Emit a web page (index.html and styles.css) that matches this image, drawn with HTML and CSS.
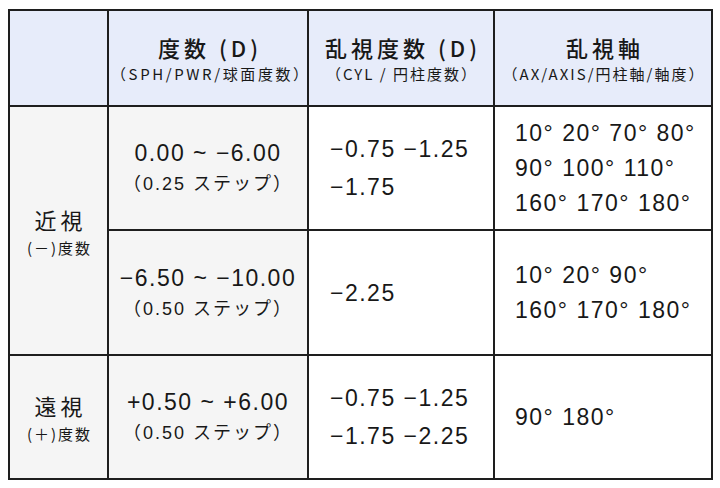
FILE: index.html
```html
<!DOCTYPE html>
<html lang="ja">
<head>
<meta charset="utf-8">
<link rel="stylesheet" href="styles.css">
</head>
<body>
<table class="spec">
  <colgroup>
    <col class="c1"><col class="c2"><col class="c3"><col class="c4">
  </colgroup>
  <thead>
    <tr class="head">
      <th></th>
      <th><div class="ttl">度数 (D)</div><div class="sub sub-wide">（SPH/PWR/球面度数）</div></th>
      <th><div class="ttl">乱視度数 (D)</div><div class="sub">（CYL / 円柱度数）</div></th>
      <th><div class="ttl">乱視軸</div><div class="sub">（AX/AXIS/円柱軸/軸度）</div></th>
    </tr>
  </thead>
  <tbody>
    <tr class="r1">
      <td class="lab" rowspan="2"><div class="lab-main">近視</div><div class="lab-sub">(－)度数</div></td>
      <td class="rng"><div class="num">0.00 ~ −6.00</div><div class="step">（0.25 ステップ）</div></td>
      <td class="cyl"><div>−0.75 −1.25</div><div>−1.75</div></td>
      <td class="ax"><div>10° 20° 70° 80°</div><div>90° 100° 110°</div><div>160° 170° 180°</div></td>
    </tr>
    <tr class="r2">
      <td class="rng"><div class="num">−6.50 ~ −10.00</div><div class="step">（0.50 ステップ）</div></td>
      <td class="cyl"><div>−2.25</div></td>
      <td class="ax"><div>10° 20° 90°</div><div>160° 170° 180°</div></td>
    </tr>
    <tr class="r3">
      <td class="lab"><div class="lab-main">遠視</div><div class="lab-sub">(＋)度数</div></td>
      <td class="rng"><div class="num">+0.50 ~ +6.00</div><div class="step">（0.50 ステップ）</div></td>
      <td class="cyl"><div>−0.75 −1.25</div><div>−1.75 −2.25</div></td>
      <td class="ax"><div>90° 180°</div></td>
    </tr>
  </tbody>
</table>
</body>
</html>
```
FILE: styles.css
```css
html, body {
  margin: 0;
  padding: 0;
  background: #ffffff;
}
body {
  padding: 9px 0 0 8px;
  font-family: "Noto Sans CJK JP", "Noto Sans", sans-serif;
  color: #181818;
}
.spec {
  border-collapse: collapse;
  table-layout: fixed;
  width: 703px;
}
.c1 { width: 99px; }
.c2 { width: 200px; }
.c3 { width: 186px; }
.c4 { width: 218px; }
.spec th, .spec td {
  border: 2px solid #1e1e1e;
  padding: 0;
  vertical-align: middle;
}
.spec .head th {
  background: #e7ecfa;
  height: 94px;
  text-align: center;
  font-weight: normal;
}
.ttl {
  font-size: 22px;
  font-weight: 500;
  letter-spacing: 4px;
  line-height: 28px;
  padding-left: 4px;
}
.sub {
  font-size: 15px;
  line-height: 20px;
  letter-spacing: 2px;
  margin-top: 3px;
  padding-left: 2px;
}
.sub-wide {
  letter-spacing: 2.6px;
}
.spec .r1 td, .spec .r3 td { height: 122px; }
.spec .r2 td { height: 123px; }
.spec .lab, .spec .rng {
  background: #f5f5f5;
  text-align: center;
}
.lab-main {
  font-size: 22px;
  letter-spacing: 4px;
  line-height: 30px;
  padding-left: 4px;
}
.lab-sub {
  font-size: 15px;
  letter-spacing: 2px;
  line-height: 20px;
  margin-top: 4px;
  padding-left: 2px;
}
.num {
  font-family: "Liberation Sans", Arial, sans-serif;
  font-size: 23px;
  letter-spacing: 1.5px;
  line-height: 32px;
}
.step {
  font-family: "Liberation Sans", "Noto Sans CJK JP", sans-serif;
  font-size: 18px;
  letter-spacing: 2px;
  line-height: 30px;
}
.spec .cyl {
  padding-left: 21px;
  font-family: "Liberation Sans", Arial, sans-serif;
  font-size: 23px;
  letter-spacing: 1.5px;
  line-height: 38px;
}
.spec .ax {
  padding-left: 20px;
  font-family: "Liberation Sans", Arial, sans-serif;
  font-size: 23px;
  letter-spacing: 1.5px;
  line-height: 35px;
}
```
